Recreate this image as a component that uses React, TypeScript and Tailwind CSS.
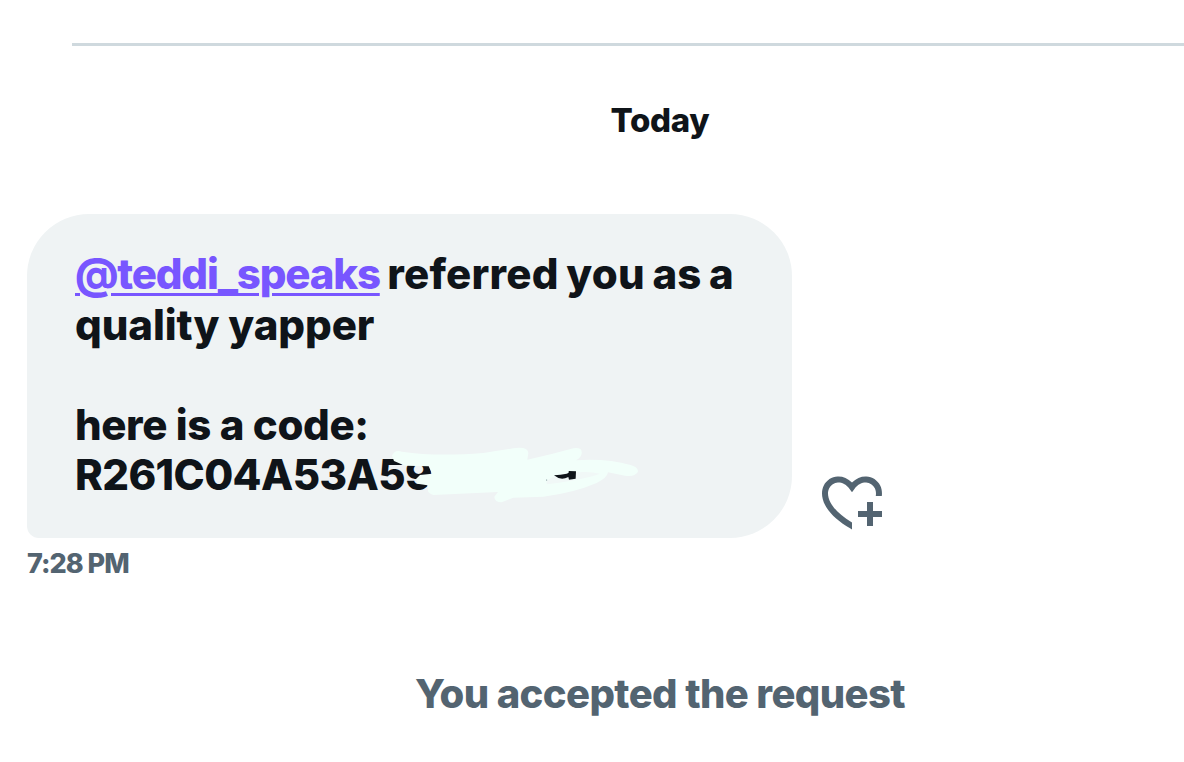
import React from 'react';

const ReactionIcon: React.FC = () => (
  <svg viewBox="0 0 24 24" className="h-[72px] w-[72px] fill-[#536471]" aria-hidden="true">
    <path d="M17 12v3h-2.998v2h3v3h2v-3h3v-2h-3.001v-3H17zm-5 6.839c-3.871-2.34-6.053-4.639-7.127-6.609-1.112-2.04-1.031-3.7-.479-4.82.561-1.13 1.667-1.84 2.91-1.91 1.222-.06 2.68.51 3.892 2.16l.806 1.09.805-1.09c1.211-1.65 2.668-2.22 3.89-2.16 1.242.07 2.347.78 2.908 1.91.334.677.49 1.554.321 2.59h2.011c.153-1.283-.039-2.469-.539-3.48-.887-1.79-2.647-2.91-4.601-3.01-1.65-.09-3.367.56-4.796 2.01-1.43-1.45-3.147-2.1-4.798-2.01-1.954.1-3.714 1.22-4.601 3.01-.896 1.81-.846 4.17.514 6.67 1.353 2.48 4.003 5.12 8.382 7.67l.502.299v-2.32z" />
  </svg>
);

// Marker strokes that hide the end of the code
const Scribble: React.FC = () => (
  <svg
    viewBox="0 0 870 240"
    className="pointer-events-none absolute left-[343px] top-[221px] h-20 w-[290px]"
    aria-hidden="true"
  >
    <path
      fill="#f2fffa"
      d="M66 62Q74 42 96 50C170 62 260 60 340 54L430 40Q474 34 475 54L472 74Q540 60 610 40Q638 36 635 56Q632 68 618 76Q710 70 782 90Q808 98 803 112Q794 126 765 122L714 112Q712 128 680 144Q610 174 520 185L430 188L395 202Q374 202 373 185L384 171L190 180Q170 174 174 160L172 151L142 146L138 132L150 120L186 116L176 94L105 92L72 78Z"
    />
    <path fill="#f1f8f7" d="M530 140Q548 118 620 112Q660 108 690 116Q640 134 530 148Z" />
    <path fill="#0f1419" d="M552 121Q572 120 590 116Q598 114 596 108L618 109L617 131L597 134L595 126Q572 138 552 121Z" />
    <circle cx="530" cy="135" r="1.5" fill="#536471" />
  </svg>
);

const App: React.FC = () => {
  return (
    <main className="flex h-[762px] w-[1184px] flex-col overflow-hidden bg-white font-['Inter',sans-serif] font-extrabold text-[#0f1419]">
      <div className="ml-[72px] mt-[43px] h-[3px] shrink-0 bg-[#cfd9de]" />

      <div className="mt-[50px] flex h-[50px] w-[1320px] shrink-0 items-center justify-center text-[33px] tracking-[-0.3px]">
        Today
      </div>

      <div className="ml-[27px] mt-[68px] flex items-end">
        <div className="relative h-[324px] w-[765px] rounded-[62px] rounded-bl-[12px] bg-[#eff3f4] pl-12 pt-9 text-[42px] leading-[50px]">
          <p className="-mt-px mb-px whitespace-nowrap">
            <a className="tracking-[-1.2px] text-[#7856ff] underline decoration-[3px] underline-offset-[4px]">@teddi_speaks</a>
            <span className="tracking-[0.25px] [word-spacing:-2px]"> referred you as a</span>
          </p>
          <p className="tracking-[-0.1px]">quality yapper</p>
          <p className="mt-[50px] tracking-[-0.4px]">here is a code:</p>
          <p className="tracking-[-0.6px]">R261C04A53A59</p>
          <Scribble />
        </div>
        <button className="ml-6" aria-label="Add reaction">
          <ReactionIcon />
        </button>
      </div>

      <div className="ml-[27px] mt-[9px] h-[34px] text-[27px] leading-[34px] tracking-[-1px] text-[#536471]">7:28 PM</div>

      <div className="mt-[88px] flex h-[50px] w-[1320px] items-center justify-center text-[40px] tracking-[-0.6px] text-[#536471]">
        You accepted the request
      </div>
    </main>
  );
};

export default App;
